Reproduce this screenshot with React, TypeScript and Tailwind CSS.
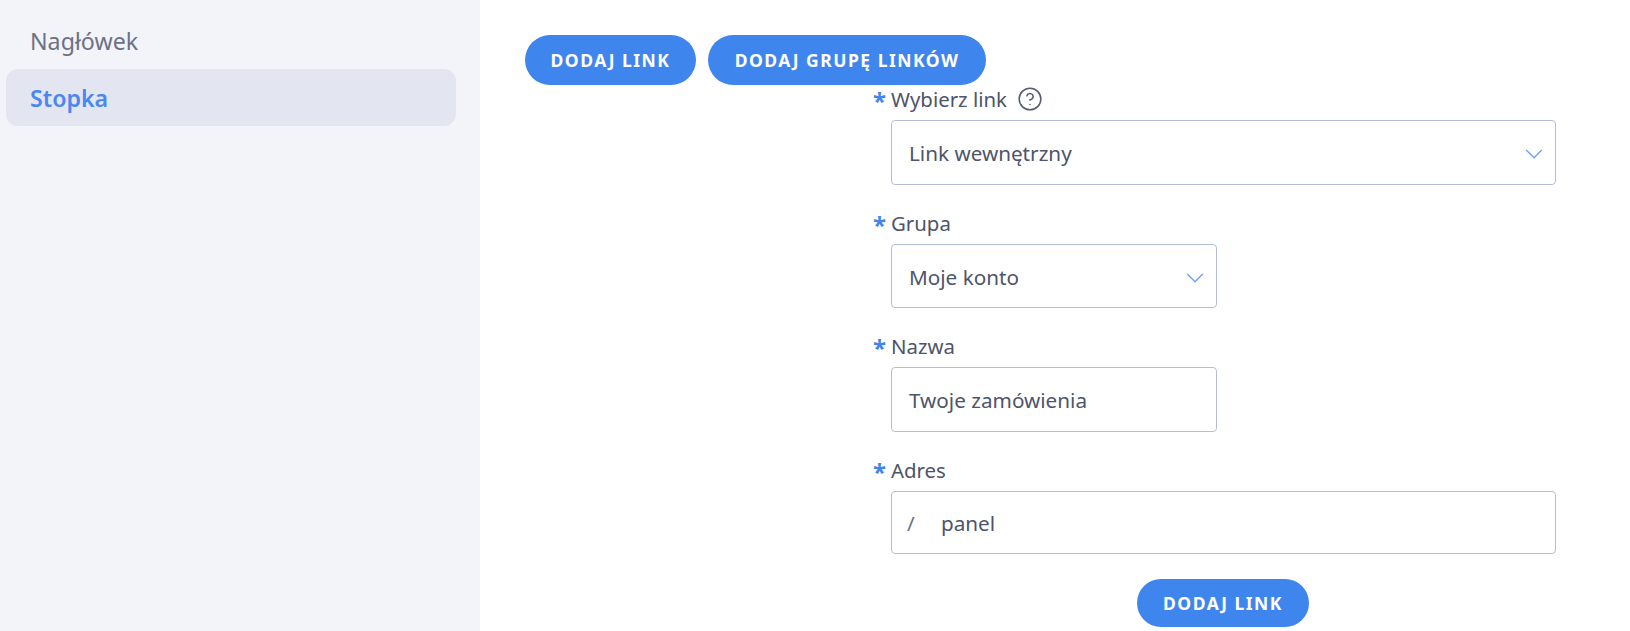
import React from 'react';
import { ChevronDown, CircleHelp } from 'lucide-react';

const font = "font-['Noto_Sans','Lato',sans-serif]";

const Label: React.FC<{ text: string; help?: boolean }> = ({ text, help }) => (
  <div className="flex items-center h-[30px] -ml-[18px] text-[20.4px] text-[#4e5469]">
    <span className="w-[18px] text-[24px] leading-[24px] h-[20px] text-[#3f85ee] font-bold">*</span>
    <span>{text}</span>
    {help && <CircleHelp className="ml-[10px] w-[26px] h-[26px] text-[#555b70]" strokeWidth={1.4} />}
  </div>
);

const Field: React.FC<{ className: string; select?: boolean; children: React.ReactNode }> = ({ className, select, children }) => (
  <div className={`flex items-center justify-between border border-[#b4bdd8] rounded-[4px] bg-white pl-[17px] pr-[6px] text-[20.7px] text-[#4e5469] ${className}`}>
    <div className="flex items-center pt-[3px]">{children}</div>
    {select && <ChevronDown className="w-[30px] h-[30px] mt-[3px] text-[#6ea3f2]" strokeWidth={1.1} />}
  </div>
);

const Button: React.FC<{ children: React.ReactNode; className: string }> = ({ children, className }) => (
  <button className={`rounded-full bg-[#3f85ee] text-white text-[17.5px] font-bold tracking-[1.5px] ${className}`}>
    {children}
  </button>
);

export default function App() {
  return (
    <div className={`flex w-[1630px] h-[631px] overflow-hidden bg-white ${font}`}>
      <aside className="w-[480px] bg-[#f2f4f9] pl-[6px] pr-[24px] pt-[13px] text-[23.2px]">
        <div className="h-[56px] flex items-center pl-[24px] text-[#6c7186]">Nagłówek</div>
        <div className="h-[57px] flex items-center pl-[24px] pt-[2px] rounded-[12px] bg-[#e3e6f0] text-[#4b87f0] font-semibold">Stopka</div>
      </aside>
      <main className="flex-1 pt-[35px] pl-[45px]">
        <div className="flex gap-[12px]">
          <Button className="w-[171px] h-[50px]">DODAJ LINK</Button>
          <Button className="w-[278px] h-[50px]">DODAJ GRUPĘ LINKÓW</Button>
        </div>
        <div className="ml-[366px] w-[665px] -mt-[1px]">
          <Label text="Wybierz link" help />
          <Field select className="h-[65px] mt-[6px]">Link wewnętrzny</Field>
          <div className="mt-[23px]"><Label text="Grupa" /></div>
          <Field select className="w-[326px] h-[64px] mt-[6px]">Moje konto</Field>
          <div className="mt-[23px]"><Label text="Nazwa" /></div>
          <Field className="w-[326px] h-[65px] mt-[6px]">Twoje zamówienia</Field>
          <div className="mt-[23px]"><Label text="Adres" /></div>
          <Field className="h-[63px] mt-[6px]">
            <span className="w-[34px] text-[#6c7186] -ml-[2px]">/</span>
            <span>panel</span>
          </Field>
          <div className="flex justify-center mt-[25px]">
            <Button className="w-[172px] h-[48px] -ml-[1px]">DODAJ LINK</Button>
          </div>
        </div>
      </main>
    </div>
  );
}
